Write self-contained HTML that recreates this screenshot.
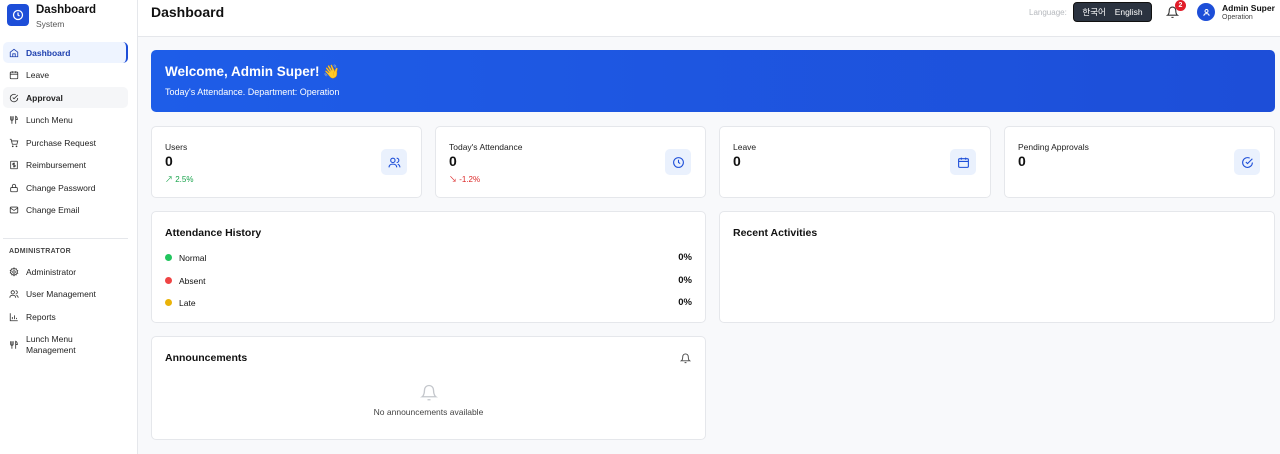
<!DOCTYPE html>
<html><head><meta charset="utf-8"><style>
*{box-sizing:border-box;margin:0;padding:0}
body{width:1280px;height:454px;overflow:hidden;font-family:"Liberation Sans","Noto Sans CJK KR",sans-serif;background:#f8f9fb;position:relative;color:#111}
.side{position:absolute;left:0;top:0;width:138px;height:454px;background:#fff;border-right:1px solid #e5e7eb}
.logo{position:absolute;left:7px;top:4px;width:22px;height:22px;border-radius:4px;background:#1d4ed8;display:flex;align-items:center;justify-content:center}
.t1{position:absolute;left:36px;top:4px;font-size:11.5px;font-weight:bold}
.t2{position:absolute;left:36px;top:19px;font-size:8.5px;color:#555}
.nav{position:absolute;left:3px;width:125px;height:21px;font-size:8.5px;color:#222;display:flex;align-items:center;padding-left:6px;border-radius:5px}
.nav svg{width:10px;height:10px;margin-right:7px;stroke:#333;fill:none;stroke-width:2}
.nav.act{background:#eef4ff;color:#1e40af;font-weight:bold;border-right:2px solid #1d4ed8}
.nav.act svg{stroke:#1e40af}
.nav.hov{background:#f5f6f8;font-weight:bold}
.hdr{position:absolute;left:138px;top:0;right:0;height:37px;background:#fff;border-bottom:1px solid #e5e7eb}
.card{position:absolute;background:#fff;border:1px solid #e5e7eb;border-radius:5px}
.lbl{font-size:8.5px;color:#222}
.big{font-size:14px;font-weight:bold}
.ib{position:absolute;right:14px;top:22px;width:26px;height:26px;border-radius:5px;background:#eaf1fd;display:flex;align-items:center;justify-content:center}
.ib svg{width:13px;height:13px;stroke:#1d4ed8;fill:none;stroke-width:2}
.row{position:absolute;left:13px;right:13px;font-size:8.5px;display:flex;align-items:center}
.dot{width:7px;height:7px;border-radius:50%;margin-right:7px}
.row b{margin-left:auto;font-size:9.5px}
h3{font-size:10.5px;font-weight:bold;position:absolute;left:13px;top:15px}
</style></head><body>
<div class="side">
<div class="logo"><svg width="12" height="12" viewBox="0 0 24 24" fill="none" stroke="#fff" stroke-width="2.5"><circle cx="12" cy="12" r="9"/><path d="M12 7v5l3 2"/></svg></div>
<div class="t1">Dashboard</div><div class="t2">System</div>
<div class="nav act" style="top:42px"><svg viewBox="0 0 24 24"><path d="M3 10l9-7 9 7v11H3z"/><path d="M9 21v-7h6v7"/></svg>Dashboard</div>
<div class="nav" style="top:64px"><svg viewBox="0 0 24 24"><rect x="3" y="5" width="18" height="16" rx="2"/><path d="M3 10h18M8 3v4M16 3v4"/></svg>Leave</div>
<div class="nav hov" style="top:87px"><svg viewBox="0 0 24 24"><path d="M21 12a9 9 0 1 1-5-8"/><path d="M9 11l3 3 9-9"/></svg>Approval</div>
<div class="nav" style="top:109px"><svg viewBox="0 0 24 24"><path d="M4 3v7a3 3 0 0 0 6 0V3M7 3v18M16 21V3c3 1 4 4 4 8h-4"/></svg>Lunch Menu</div>
<div class="nav" style="top:132px"><svg viewBox="0 0 24 24"><path d="M2 3h3l3 12h11l2-8H6"/><circle cx="9" cy="20" r="1"/><circle cx="18" cy="20" r="1"/></svg>Purchase Request</div>
<div class="nav" style="top:154px"><svg viewBox="0 0 24 24"><rect x="4" y="3" width="16" height="18" rx="1"/><path d="M14 8h-3a1.5 1.5 0 0 0 0 4h2a1.5 1.5 0 0 1 0 4h-3M12 6v12"/></svg>Reimbursement</div>
<div class="nav" style="top:177px"><svg viewBox="0 0 24 24"><rect x="4" y="11" width="16" height="10" rx="2"/><path d="M8 11V7a4 4 0 0 1 8 0v4"/></svg>Change Password</div>
<div class="nav" style="top:199px"><svg viewBox="0 0 24 24"><rect x="3" y="5" width="18" height="14" rx="2"/><path d="M3 7l9 6 9-6"/></svg>Change Email</div>
<div style="position:absolute;left:3px;top:238px;width:125px;border-top:1px solid #e5e7eb"></div>
<div style="position:absolute;left:9px;top:248px;font-size:7px;font-weight:bold;color:#444;letter-spacing:.3px">ADMINISTRATOR</div>
<div class="nav" style="top:261px"><svg viewBox="0 0 24 24"><circle cx="12" cy="12" r="3"/><path d="M12 2l2 3 3-1 1 3 3 2-2 3 2 3-3 1-1 3-3-1-2 3-2-3-3 1-1-3-3-2 2-3-2-3 3-1 1-3 3 1z"/></svg>Administrator</div>
<div class="nav" style="top:283px"><svg viewBox="0 0 24 24"><circle cx="9" cy="8" r="4"/><path d="M2 21c0-4 3-6 7-6s7 2 7 6M16 4a4 4 0 0 1 0 8M22 21c0-3-2-5-4-6"/></svg>User Management</div>
<div class="nav" style="top:306px"><svg viewBox="0 0 24 24"><path d="M3 3v18h18M8 17v-5M13 17V8M18 17v-3"/></svg>Reports</div>
<div class="nav" style="top:330px;height:30px;line-height:11px"><svg viewBox="0 0 24 24"><path d="M4 3v7a3 3 0 0 0 6 0V3M7 3v18M16 21V3c3 1 4 4 4 8h-4"/></svg><span>Lunch Menu<br>Management</span></div>
</div>
<div class="hdr">
<div style="position:absolute;left:13px;top:4px;font-size:14px;font-weight:bold">Dashboard</div>
<div style="position:absolute;left:891px;top:8px;font-size:8px;color:#b5b8bd">Language:</div>
<div style="position:absolute;left:935px;top:2px;width:79px;height:20px;border-radius:4px;background:#2b3340;border:1px solid #111;color:#fff;font-size:8.5px;display:flex;align-items:center;justify-content:space-around;padding:0 4px"><span>한국어</span><span>English</span></div>
<svg style="position:absolute;left:1028px;top:6px" width="13" height="13" viewBox="0 0 24 24" fill="none" stroke="#333" stroke-width="2"><path d="M6 8a6 6 0 0 1 12 0c0 7 3 9 3 9H3s3-2 3-9M10 21h4"/></svg>
<div style="position:absolute;left:1037px;top:0;width:11px;height:11px;border-radius:50%;background:#e11d2a;color:#fff;font-size:7px;font-weight:bold;text-align:center;line-height:11px">2</div>
<div style="position:absolute;left:1059px;top:3px;width:18px;height:18px;border-radius:50%;background:#1d4ed8;display:flex;align-items:center;justify-content:center"><svg width="9" height="9" viewBox="0 0 24 24" fill="none" stroke="#fff" stroke-width="2.5"><circle cx="12" cy="8" r="4"/><path d="M5 21c0-4 3-6 7-6s7 2 7 6"/></svg></div>
<div style="position:absolute;left:1084px;top:3px;font-size:8.5px;font-weight:bold">Admin Super</div>
<div style="position:absolute;left:1084px;top:14px;font-size:7px;color:#444">Operation</div>
</div>
<div style="position:absolute;left:151px;top:50px;width:1124px;height:62px;border-radius:5px;background:linear-gradient(90deg,#1e5de8,#1d4ed8);color:#fff">
<div style="position:absolute;left:14px;top:14px;font-size:13.5px;font-weight:bold">Welcome, Admin Super! 👋</div>
<div style="position:absolute;left:14px;top:37px;font-size:9px">Today's Attendance. Department: Operation</div></div>

<div class="card" style="left:151px;top:126px;width:271px;height:72px"><div class="lbl" style="position:absolute;left:13px;top:15px">Users</div><div class="big" style="position:absolute;left:13px;top:26px">0</div><div style="position:absolute;left:13px;top:47px;font-size:8px;color:#16a34a">↗ 2.5%</div><div class="ib"><svg viewBox="0 0 24 24"><circle cx="9" cy="8" r="4"/><path d="M2 21c0-4 3-6 7-6s7 2 7 6M16 4a4 4 0 0 1 0 8M22 21c0-3-2-5-4-6"/></svg></div></div>
<div class="card" style="left:435px;top:126px;width:271px;height:72px"><div class="lbl" style="position:absolute;left:13px;top:15px">Today's Attendance</div><div class="big" style="position:absolute;left:13px;top:26px">0</div><div style="position:absolute;left:13px;top:47px;font-size:8px;color:#dc2626">↘ -1.2%</div><div class="ib"><svg viewBox="0 0 24 24"><circle cx="12" cy="12" r="9"/><path d="M12 7v5l3 2"/></svg></div></div>
<div class="card" style="left:719px;top:126px;width:272px;height:72px"><div class="lbl" style="position:absolute;left:13px;top:15px">Leave</div><div class="big" style="position:absolute;left:13px;top:26px">0</div><div class="ib"><svg viewBox="0 0 24 24"><rect x="3" y="5" width="18" height="16" rx="2"/><path d="M3 10h18M8 3v4M16 3v4"/></svg></div></div>
<div class="card" style="left:1004px;top:126px;width:271px;height:72px"><div class="lbl" style="position:absolute;left:13px;top:15px">Pending Approvals</div><div class="big" style="position:absolute;left:13px;top:26px">0</div><div class="ib"><svg viewBox="0 0 24 24"><path d="M21 12a9 9 0 1 1-5-8"/><path d="M9 11l3 3 9-9"/></svg></div></div>

<div class="card" style="left:151px;top:211px;width:555px;height:112px"><h3>Attendance History</h3>
<div class="row" style="top:40px"><span class="dot" style="background:#22c55e"></span>Normal<b>0%</b></div>
<div class="row" style="top:63px"><span class="dot" style="background:#ef4444"></span>Absent<b>0%</b></div>
<div class="row" style="top:85px"><span class="dot" style="background:#eab308"></span>Late<b>0%</b></div></div>
<div class="card" style="left:719px;top:211px;width:556px;height:112px"><h3>Recent Activities</h3></div>
<div class="card" style="left:151px;top:336px;width:555px;height:104px"><h3>Announcements</h3>
<svg style="position:absolute;right:14px;top:16px" width="11" height="11" viewBox="0 0 24 24" fill="none" stroke="#444" stroke-width="2"><path d="M6 8a6 6 0 0 1 12 0c0 7 3 9 3 9H3s3-2 3-9M10 21h4"/></svg>
<svg style="position:absolute;left:268px;top:47px" width="18" height="18" viewBox="0 0 24 24" fill="none" stroke="#c4c7cc" stroke-width="1.8"><path d="M6 8a6 6 0 0 1 12 0c0 7 3 9 3 9H3s3-2 3-9M10 21h4"/></svg>
<div style="position:absolute;left:0;right:0;top:70px;text-align:center;font-size:8.5px;color:#444">No announcements available</div></div>
</body></html>
